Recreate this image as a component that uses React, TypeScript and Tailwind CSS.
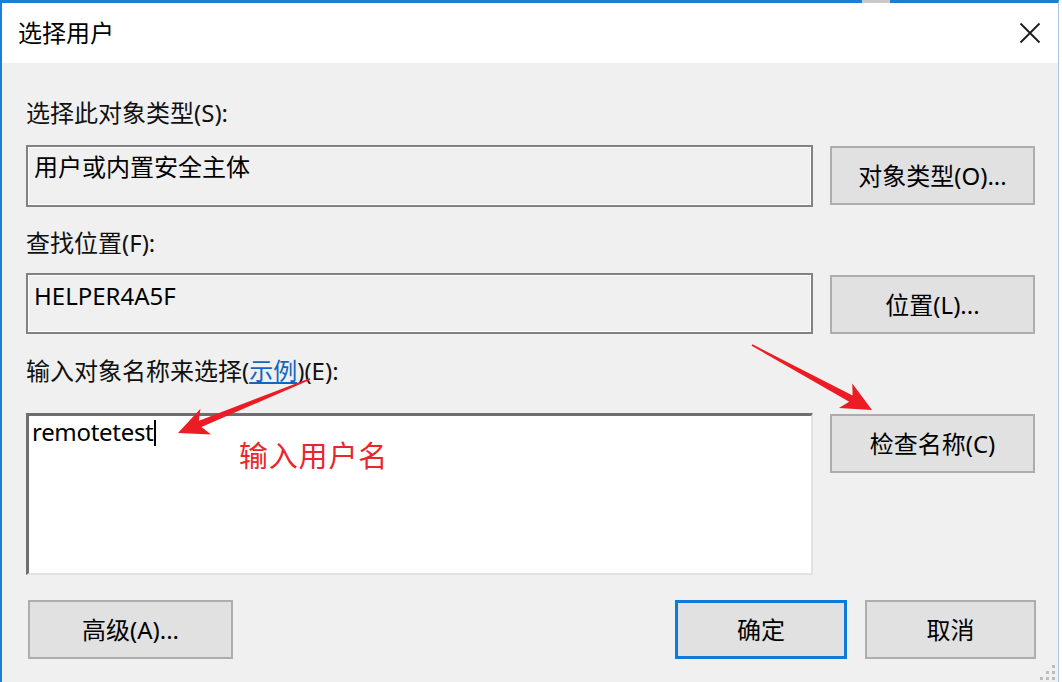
import React from "react";

const FONT = { fontFamily: "'Noto Sans', 'Noto Sans CJK SC', sans-serif" };

function Btn({ children, primary = false, className = "" }: { children: React.ReactNode; primary?: boolean; className?: string }) {
  return (
    <div
      className={
        "h-[59px] flex items-center justify-center bg-[#e1e1e1] text-[24px] text-black " +
        (primary ? "border-[3px] border-[#0f7ad8] " : "border-2 border-[#adadad] ") +
        className
      }
    >
      {children}
    </div>
  );
}

export default function App() {
  return (
    <div className="w-[1062px] h-[682px] bg-white relative overflow-hidden" style={FONT}>
      <div className="absolute left-[862px] top-0 w-[28px] h-[3px] bg-[#c9c9c9]" />
      <div className="w-[1059px] h-[682px] border-l-[2px] border-t-[3px] border-r border-[#1b7fd6] border-r-[#a9c6e3] flex flex-col">
        {/* title bar */}
        <div className="h-[60px] bg-white flex items-center justify-between pl-[16px] pr-[16px] shrink-0">
          <span className="text-[24px] leading-[30px] text-black">选择用户</span>
          <svg width="22" height="22" viewBox="0 0 22 22" className="mr-[1px]">
            <path d="M1.5 1.5 L20.5 20.5 M20.5 1.5 L1.5 20.5" stroke="#1a1a1a" strokeWidth="1.8" />
          </svg>
        </div>
        {/* body */}
        <div className="flex-1 bg-[#f0f0f0] pl-[24px] relative">
          <div className="mt-[35px] text-[24px] leading-[30px] text-[#111]">选择此对象类型(S):</div>
          <div className="mt-[17px] flex items-start">
            <div className="w-[787px] h-[62px] border-2 border-[#828282] shadow-[inset_0_0_0_1px_#ffffff] bg-[#f0f0f0] pl-[6px] pt-[6px] text-[24px] leading-[28px] text-black">
              用户或内置安全主体
            </div>
            <Btn className="ml-[17px] mt-[1px] w-[205px]">对象类型(O)...</Btn>
          </div>
          <div className="mt-[21px] text-[24px] leading-[30px] text-[#111]">查找位置(F):</div>
          <div className="mt-[15px] flex items-start">
            <div className="w-[787px] h-[61px] border-2 border-[#828282] shadow-[inset_0_0_0_1px_#ffffff] bg-[#f0f0f0] pl-[6px] pt-[7px] text-[24px] leading-[28px] text-black">
              HELPER4A5F
            </div>
            <Btn className="ml-[17px] mt-[2px] w-[205px]">位置(L)...</Btn>
          </div>
          <div className="mt-[22px] text-[24px] leading-[30px] text-[#111]">
            输入对象名称来选择(<span className="text-[#1565c0] underline underline-offset-2">示例</span>)(E):
          </div>
          <div className="mt-[27px] flex items-start">
            <div className="w-[787px] h-[162px] bg-white border-t-[3px] border-l-[3px] border-r-2 border-b-2 border-t-[#6e6e6e] border-l-[#6e6e6e] border-r-[#e2e2e2] border-b-[#e2e2e2] pl-[3px] pt-[2px] text-[24px] leading-[28px] text-black flex items-start">
              <span className="tracking-[-0.3px]">remotetest</span>
              <span className="inline-block w-[2px] h-[26px] bg-black mt-[2px]" />
            </div>
            <Btn className="ml-[17px] mt-[1px] w-[205px]">检查名称(C)</Btn>
          </div>
          <div className="mt-[25px] flex items-start">
            <Btn className="ml-[2px] w-[205px]">高级(A)...</Btn>
            <div className="flex-1" />
            <Btn primary className="w-[172px]">确定</Btn>
            <Btn className="ml-[18px] w-[171px] mr-[22px]">取消</Btn>
          </div>
          {/* resize grip */}
          <svg className="absolute right-[2px] bottom-[1px]" width="16" height="16" viewBox="0 0 16 16">
            <rect x="12" y="0" width="3" height="3" fill="#bcbcbc" />
            <rect x="6" y="6" width="3" height="3" fill="#bcbcbc" />
            <rect x="12" y="6" width="3" height="3" fill="#bcbcbc" />
            <rect x="0" y="12" width="3" height="3" fill="#bcbcbc" />
            <rect x="6" y="12" width="3" height="3" fill="#bcbcbc" />
            <rect x="12" y="12" width="3" height="3" fill="#bcbcbc" />
          </svg>
        </div>
      </div>

      {/* annotations */}
      <svg className="absolute left-0 top-0 pointer-events-none" width="1062" height="682" viewBox="0 0 1062 682">
        <polygon
          points="178,433 211.05,434.58 201.5,427.1 310.3,379.7 309.7,378.3 198.9,420.7 200.45,408.68"
          fill="#ec1c24"
        />
        <polygon
          points="872,410 852.3,383.4 852.6,395.5 752.4,344.3 751.6,345.7 849.2,401.7 838.9,408"
          fill="#ec1c24"
        />
      </svg>
      <div
        className="absolute left-[239px] top-[438px] text-[29px] leading-[32px] tracking-[0.8px] text-[#e8262b]"
        style={{ fontFamily: "'Noto Sans CJK SC', sans-serif" }}
      >
        输入用户名
      </div>
    </div>
  );
}
